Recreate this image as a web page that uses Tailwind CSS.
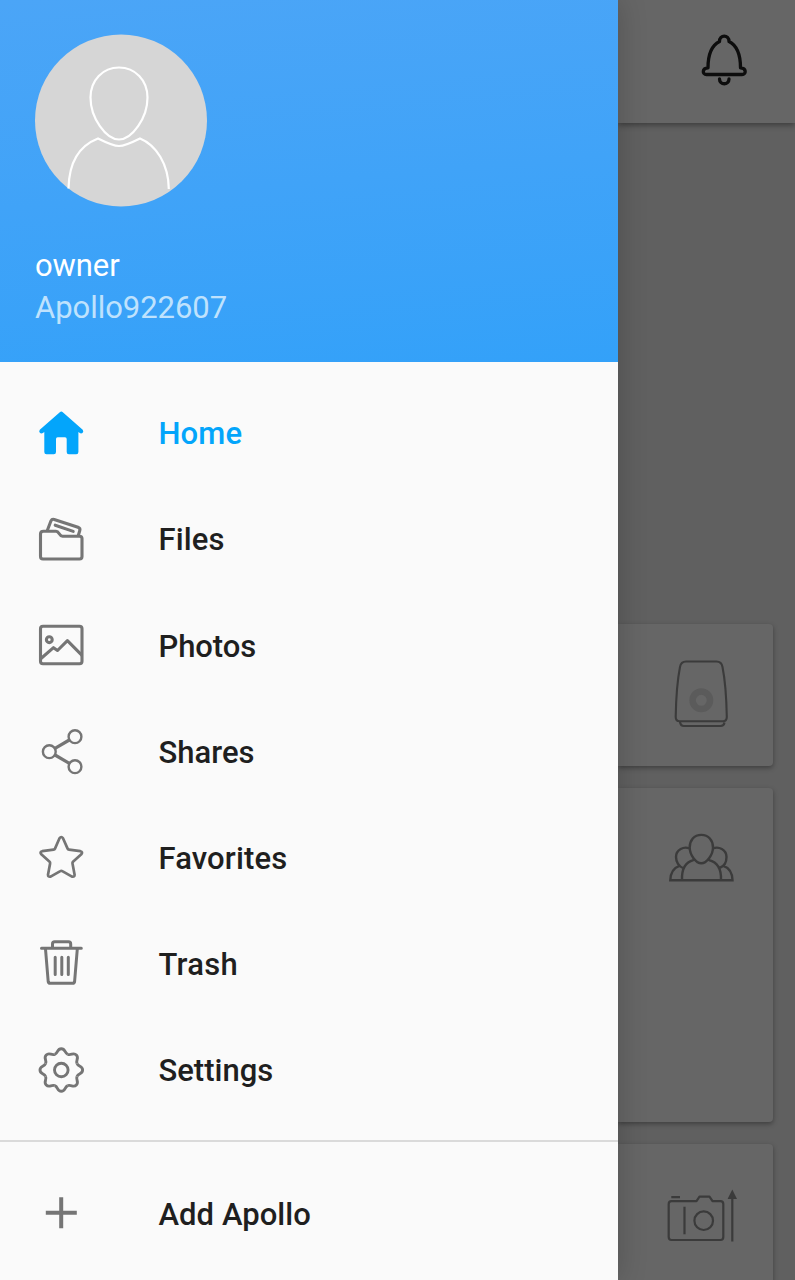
<!DOCTYPE html>
<html lang="en">
<head>
<meta charset="utf-8">
<title>Apollo</title>
<script src="https://cdn.jsdelivr.net/npm/@tailwindcss/browser@4"></script>
</head>
<body class="font-['Roboto',sans-serif]">
<div class="flex h-[1280px] w-[795px] overflow-hidden bg-[#606060]">
  <aside class="relative z-10 flex w-[618px] shrink-0 flex-col bg-[#fafafa] shadow-[0_0_28px_rgba(0,0,0,0.2)]">
    <header class="flex h-[362px] shrink-0 flex-col bg-linear-175 from-[#4ba5f7] to-[#33a1f9] pt-[34px] pl-[35px]">
      <svg class="h-[173px] w-[173px] shrink-0" viewBox="35 34 173 173" fill="none" stroke="#fff" stroke-width="2.2">
        <circle cx="121" cy="120.500" r="86" fill="#d6d6d6" stroke="none"/>
        <path d="M119 67.500C135 67.500 147.500 80 147.500 97.500C147.500 118 132 139.500 119 139.500C106 139.500 90.500 118 90.500 97.500C90.500 80 103 67.500 119 67.500Z"/>
        <path d="M68.500 188.500C69 162 80 145.500 98 138.500C109 144 114 146 119 146C124 146 129 144 140 138.500C156 145 168.500 164 168.800 189"/>
      </svg>
      <div class="mt-[38px] text-[31px] leading-[42px] tracking-[-0.1px] text-white">owner</div>
      <div class="text-[31px] leading-[42px] tracking-[-0.04px] text-[#bfe2fd]">Apollo922607</div>
    </header>
    <nav class="flex flex-col pt-[18px] text-[31px] font-medium text-[#1f1f1f]">
      <a class="flex h-[106px] items-center pl-[37px] text-[#03a5fb]">
        <svg class="h-12 w-12" viewBox="37 409 48 48" fill="currentColor"><path d="M59.800 412.200Q61.300 411 62.800 412.200L82.700 429.800Q84 431.500 82.500 433Q81 434 79.500 432.800L78.400 432V452Q78.400 454.300 76.200 454.300H68.800Q66.700 454.300 66.700 452V439Q66.700 437.300 65 437.300H57.600Q56 437.300 56 439V452Q56 454.300 53.800 454.300H46.500Q44.300 454.300 44.300 452V432L43.200 432.800Q41.500 434 40 433Q38.500 431.500 39.800 429.800Z"/></svg>
        <span class="ml-[73.5px] pt-[3px] tracking-[0.1px]">Home</span>
      </a>
      <a class="flex h-[106px] items-center pl-[37px]">
        <svg class="h-12 w-12" viewBox="37 515 48 48" fill="none" stroke="#757575" stroke-width="3.100" stroke-linecap="round" stroke-linejoin="round"><path d="M43.500 531.300H56C59.500 531.300 59 536.200 62.500 536.200H79.500Q82 536.200 82 538.500V556.500Q82 559 79.500 559H43Q40.500 559 40.500 556.500V534Q40.500 531.300 43.500 531.300Z"/><path d="M47.300 530.500L51 520.800Q52 518.700 54.200 519.400L78 527.300Q80.500 528.300 79.800 530.500L78.300 535.500M55.200 525.200L73.200 531.400"/></svg>
        <span class="ml-[73.5px] pt-[3px] tracking-[0.1px]">Files</span>
      </a>
      <a class="flex h-[106px] items-center pl-[37px]">
        <svg class="h-12 w-12" viewBox="37 621 48 48" fill="none" stroke="#757575" stroke-width="3.100" stroke-linejoin="round"><rect x="40.500" y="626.300" width="41.500" height="37.500" rx="2.500"/><circle cx="49.300" cy="639.700" r="2.900"/><path d="M41 658.500L53.500 647.700L57.500 650.500L67.400 640.700L82 655.300"/></svg>
        <span class="ml-[73.5px] pt-[4px] tracking-[-0.1px]">Photos</span>
      </a>
      <a class="flex h-[106px] items-center pl-[37px]">
        <svg class="h-12 w-12" viewBox="37 727 48 48" fill="none" stroke="#757575" stroke-width="2.400"><circle cx="75" cy="736.700" r="6.400"/><circle cx="49.300" cy="751.700" r="6.400"/><circle cx="75" cy="766.700" r="6.400"/><path stroke-width="3.200" d="M55 748.400L69.300 740M55 755L69.300 763.300"/></svg>
        <span class="ml-[73.5px] pt-[5px]">Shares</span>
      </a>
      <a class="flex h-[106px] items-center pl-[37px]">
        <svg class="h-12 w-12" viewBox="37 833 48 48" fill="none" stroke="#757575" stroke-width="2.700" stroke-linejoin="round"><path d="M59.500 838.300Q61.300 835.700 63 838.300L67.600 848.600Q68 849.500 69 849.600L80.400 851.200Q83.200 852 81.300 854.300L73 861.800Q72.300 862.500 72.500 863.500L74.600 874.800Q74.600 877.300 72 876.600L62.300 871.100Q61.300 870.500 60.300 871.100L50.600 876.600Q48 877.300 48 874.800L50.100 863.500Q50.300 862.500 49.600 861.800L41.300 854.300Q39.400 852 42.200 851.200L53.600 849.600Q54.600 849.500 55 848.600Z"/></svg>
        <span class="ml-[73.5px] pt-[5px] tracking-[0.14px]">Favorites</span>
      </a>
      <a class="flex h-[106px] items-center pl-[37px]">
        <svg class="h-12 w-12" viewBox="37 939 48 48" fill="none" stroke="#757575" stroke-width="3" stroke-linecap="round" stroke-linejoin="round"><path d="M41.500 948.200H81.300M52.500 948V944Q52.500 941.800 54.700 941.800H68.500Q70.700 941.800 70.700 944V948M45.500 949L48.200 981.500Q48.400 983.300 50.200 983.300H72.600Q74.400 983.300 74.600 981.500L77.300 949M55.200 957.200V974.500M61.800 957.200V974.500M68.300 957.200V974.500"/></svg>
        <span class="ml-[73.5px] pt-[5px] tracking-[0.25px]">Trash</span>
      </a>
      <a class="flex h-[106px] items-center pl-[37px]">
        <svg class="h-12 w-12" viewBox="-24.300 -25 48 48" fill="none" stroke="#757575" stroke-width="2.900">
          <defs><path id="tooth" d="M-6.500 -15.700C-3 -17.150 -4.300 -21.300 0 -21.300C4.300 -21.300 3 -17.150 6.500 -15.700"/></defs>
          <use href="#tooth"/><use href="#tooth" transform="rotate(45)"/><use href="#tooth" transform="rotate(90)"/><use href="#tooth" transform="rotate(135)"/><use href="#tooth" transform="rotate(180)"/><use href="#tooth" transform="rotate(225)"/><use href="#tooth" transform="rotate(270)"/><use href="#tooth" transform="rotate(315)"/>
          <circle r="6.800"/>
        </svg>
        <span class="ml-[73.5px] pt-[5px]">Settings</span>
      </a>
      <div class="mt-[18px] h-[2px] bg-[#dadada]"></div>
      <a class="mt-[18px] flex h-[106px] items-center pl-[37px]">
        <svg class="h-12 w-12" viewBox="37 1189 48 48" stroke="#757575" stroke-width="4"><path d="M45.800 1212.700H76.800M61.200 1197.200V1228.200"/></svg>
        <span class="ml-[73.5px] pt-[4px] tracking-[0.05px]">Add Apollo</span>
      </a>
    </nav>
  </aside>
  <main class="flex w-[177px] flex-col">
    <div class="h-[123px] shrink-0 bg-[#666] pt-[30px] pl-[76px] shadow-[0_2px_6px_rgba(0,0,0,0.4)]">
      <svg class="h-[60px] w-[60px]" viewBox="694 30 60 60" fill="none" stroke="#0d0d0d" stroke-width="3.300" stroke-linecap="round" stroke-linejoin="round"><path d="M719.500 41.500C719.500 34.300 729 34.300 729 41.500C736 45 740.500 54 740.500 67.800C746.500 68 746.500 74.500 742 74.500H706.500C702 74.500 702 68 708 67.800C708 54 712.500 45 719.500 41.500ZM719.500 79C719.500 85.300 729 85.300 729 79"/></svg>
    </div>
    <div class="mt-[501px] h-[142px] w-[155px] shrink-0 rounded-r-[4px] bg-[#666] pt-[31px] pl-[48px] shadow-[0_2px_5px_rgba(0,0,0,0.35)]">
      <svg class="h-20 w-[70px]" viewBox="666 655 70 80" fill="none" stroke="#3b3b3b" stroke-width="2.100"><path d="M686 661.500H716.500Q721.500 661.500 722.500 667C725.500 682 726.500 700 726.800 717Q726.800 721.200 723 721.200H679.500Q675.700 721.200 675.700 717C676 700 677 682 680 667Q681 661.500 686 661.500ZM680 722Q680.500 726 684 726H720.500Q724 726 724.500 722.500"/><circle cx="701.300" cy="700.300" r="8.700" stroke="#5b5b5b" stroke-width="6.500"/></svg>
    </div>
    <div class="mt-[21.5px] h-[334.5px] w-[155px] shrink-0 rounded-r-[4px] bg-[#666] pt-[42.5px] pl-[48px] shadow-[0_2px_5px_rgba(0,0,0,0.35)]">
      <svg class="h-[60px] w-[70px]" viewBox="666 830 70 60" fill="none" stroke="#3b3b3b" stroke-width="2.400"><path d="M701.300 834.900C708.500 834.900 713 840.500 713 847.500C713 855 706.500 863.200 701.300 863.200C696 863.200 689.700 855 689.700 847.500C689.700 840.500 694 834.900 701.300 834.900ZM682 880.300C681.500 868 686 862 693.500 860.200M721 880.300C721.500 868 716.500 862 709 860.200M689.500 848.500C684 846 676 849.500 676 857C676 862 679 866.500 683 868M713 848.500C718.500 846 726.500 849.500 726.500 857C726.500 862 724 866.500 719.500 868M679.500 865.800C673 868 670.500 872.500 670.300 880.300H732.500C732.300 872.500 730 868 723.300 865.800"/></svg>
    </div>
    <div class="mt-[22px] h-[160px] w-[155px] shrink-0 rounded-r-[4px] bg-[#666] pt-[38px] pl-[48px] shadow-[0_2px_5px_rgba(0,0,0,0.35)]">
      <svg class="h-[70px] w-[76px]" viewBox="666 1182 76 70" fill="none" stroke="#3b3b3b" stroke-width="2.200"><path stroke-linejoin="round" d="M671.500 1201.200H696.500L699.500 1196.700H709.500L712.500 1201.200H720.500Q723.300 1201.200 723.300 1204V1237Q723.300 1240 720.500 1240H671.500Q668.700 1240 668.700 1237V1204Q668.700 1201.200 671.500 1201.200Z"/><path d="M671.300 1197.200H680M684.500 1206.700V1234.300M732.300 1196V1241.500"/><circle cx="703.700" cy="1220.700" r="9.300"/><path d="M732.300 1189.500L737 1199H727.600Z" fill="#3b3b3b" stroke="none"/></svg>
    </div>
  </main>
</div>
</body>
</html>
